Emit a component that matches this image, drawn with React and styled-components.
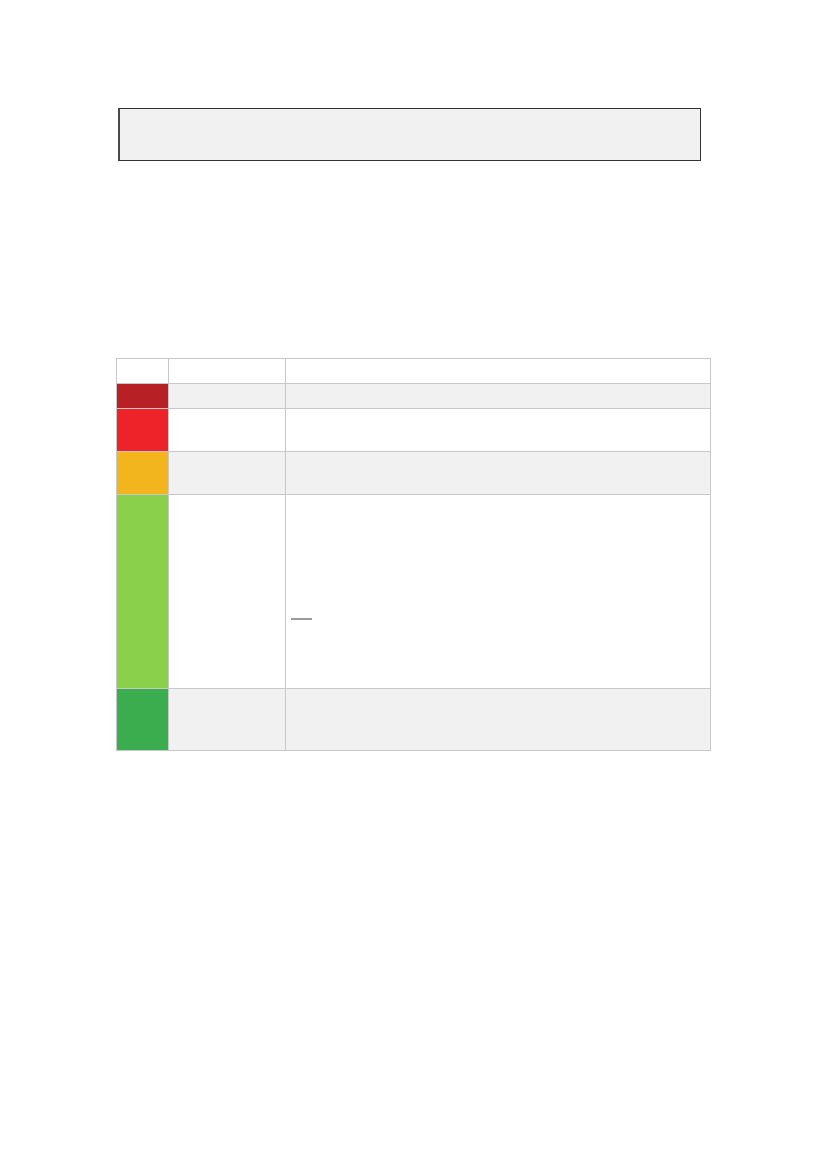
import React from 'react';
import styled, { createGlobalStyle } from 'styled-components';

const GlobalStyle = createGlobalStyle`
  html, body {
    margin: 0;
    padding: 0;
    background: #ffffff;
    font-family: "Liberation Sans", Arial, sans-serif;
  }
`;

const levels = [
  { color: '#b72025', height: 25, shaded: true },
  { color: '#ee2229', height: 43 },
  { color: '#f2b51d', height: 43, shaded: true },
  { color: '#8bd04a', height: 194, dash: true },
  { color: '#3bad4f', height: 62, shaded: true },
];

export default function App() {
  return (
    <>
      <GlobalStyle />
      <Page>
        <Notice />
        <Legend>
          <colgroup>
            <col style={{ width: 52 }} />
            <col style={{ width: 117 }} />
            <col />
          </colgroup>
          <tbody>
            <Row $height={25}>
              <Cell />
              <Cell />
              <Cell />
            </Row>
            {levels.map((item, i) => (
              <Row key={i} $height={item.height} $shaded={item.shaded}>
                <Swatch $color={item.color} />
                <Cell />
                <Cell>{item.dash && <Dash />}</Cell>
              </Row>
            ))}
          </tbody>
        </Legend>
      </Page>
    </>
  );
}

const Page = styled.div`
  display: flex;
  flex-direction: column;
  align-items: flex-start;
  gap: 197px;
  padding: 108px 0 0 116px;
`;

const Notice = styled.div`
  width: 583px;
  height: 53px;
  margin-left: 2px;
  box-sizing: border-box;
  background: #f1f1f1;
  border: 1px solid #333333;
  border-left-width: 2px;
  border-left-color: #4a4a4a;
`;

const Legend = styled.table`
  width: 595px;
  border-collapse: collapse;
  table-layout: fixed;
  border: 1px solid #c8c8c8;
`;

const Row = styled.tr`
  height: ${({ $height }) => $height}px;
  background: ${({ $shaded }) => ($shaded ? '#f1f1f1' : '#ffffff')};
`;

const Cell = styled.td`
  border: 1px solid #c8c8c8;
  padding: 0 0 0 5px;
  vertical-align: top;
`;

const Swatch = styled(Cell)`
  background: ${({ $color }) => $color};
`;

const Dash = styled.span`
  display: block;
  width: 21px;
  height: 2px;
  margin-top: 123px;
  background: #9a9a9a;
`;
